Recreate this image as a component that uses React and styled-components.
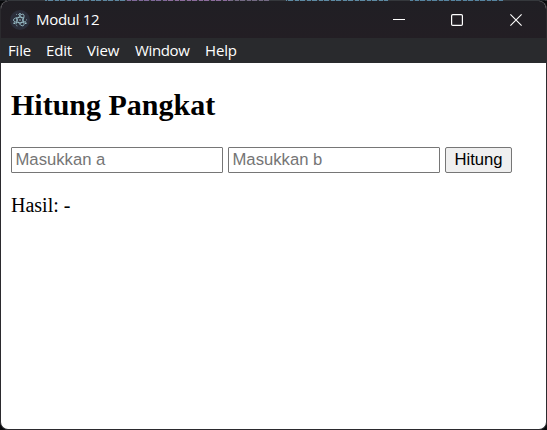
import React from "react";
import styled, { createGlobalStyle } from "styled-components";

const GlobalStyle = createGlobalStyle`
  * { box-sizing: border-box; }
  body { margin: 0; background: #0b0d10; overflow: hidden; }
`;

const Desktop = styled.div`
  width: 547px;
  height: 430px;
  background: #08090b;
`;

/* Sliver of the code editor that shows above the window */
const EditorSliver = styled.div`
  height: 1px;
  background:
    repeating-linear-gradient(90deg, transparent 0 5px, #35383c 5px 7px, transparent 7px 11px, #35383c 11px 12px),
    linear-gradient(90deg, #1c1f23 0 8px, #35383c 8px 45px, #5d87a0 45px 125px, #80699a 125px 166px,
      #8c6c9c 166px 230px, #746a83 230px 269px, #35383c 269px 286px, #5d8aa3 286px 388px,
      #35383c 388px 410px, #5684a0 410px 503px, #35383c 503px 539px, #1c1f23 539px);
`;

const Window = styled.div`
  display: flex;
  flex-direction: column;
  height: 429px;
  border: 1px solid #2b2a2e;
  border-top: 0;
  border-radius: 8px;
  overflow: hidden;
  background: #fff;
`;

const TitleBar = styled.header`
  display: flex;
  align-items: center;
  height: 37px;
  flex: none;
  padding-left: 9px;
  background: linear-gradient(#201f24, #231e24);
  color: #fff;
`;

const AppIcon = styled.svg`
  width: 20px;
  height: 20px;
  flex: none;
`;

const Title = styled.span`
  flex: 1;
  padding: 0 0 2px 6px;
  font: 15px/20px "Open Sans", sans-serif;
  letter-spacing: -0.3px;
`;

const Control = styled.button`
  display: flex;
  align-items: center;
  justify-content: center;
  width: ${(p) => p.$width || 58}px;
  height: 37px;
  padding: 0;
  border: 0;
  background: none;
  color: #fff;
`;

const MenuBar = styled.nav`
  display: flex;
  height: 25px;
  flex: none;
  padding-left: 7px;
  background: #292a2d;
`;

const MenuItem = styled.span`
  width: ${(p) => p.$width}px;
  color: #fff;
  font: 15px/25px "Open Sans", sans-serif;
  letter-spacing: ${(p) => p.$spacing || -0.15}px;
  white-space: nowrap;
`;

const Content = styled.main`
  padding: 0 10px;
  color: #000;
  font: 20px/23px "Liberation Serif", serif;
`;

const Heading = styled.h2`
  margin: 25px 0;
  font-size: 30px;
  line-height: 34px;
`;

const Form = styled.div`
  display: flex;
  gap: 5px;
`;

const NumberField = styled.input`
  width: 212px;
  height: 26px;
  padding: 1px 3.5px;
  border: 1px solid #767676;
  border-radius: 1px;
  background: #fff;
  font: 16.667px "Liberation Sans", Arial, sans-serif;
  &::placeholder { color: #757575; }
`;

const SubmitButton = styled.button`
  width: 67px;
  height: 26px;
  padding: 0;
  border: 1px solid #767676;
  border-radius: 2px;
  background: #efefef;
  color: #000;
  font: 16.667px "Liberation Sans", Arial, sans-serif;
`;

const Result = styled.p`
  margin: 21px 0;
`;

const menus = [
  { label: "File", width: 38 },
  { label: "Edit", width: 41 },
  { label: "View", width: 48 },
  { label: "Window", width: 70, spacing: -0.35 },
  { label: "Help", width: 40 },
];

export default function App() {
  return (
    <>
      <GlobalStyle />
      <Desktop>
        <EditorSliver />
        <Window>
          <TitleBar>
            <AppIcon viewBox="0 0 20 20">
              <circle cx="10" cy="10" r="10" fill="#2b2e3b" />
              <g fill="none" stroke="#9fc5cf" strokeWidth="0.8" strokeLinecap="round">
                <ellipse cx="10" cy="10" rx="6.6" ry="2.7" strokeDasharray="24 4" strokeDashoffset="-2" />
                <ellipse cx="10" cy="10" rx="6.6" ry="2.7" strokeDasharray="24 4" strokeDashoffset="-2" transform="rotate(120 10 10)" />
                <ellipse cx="10" cy="10" rx="6.6" ry="2.7" strokeDasharray="24 4" strokeDashoffset="-2" transform="rotate(240 10 10)" />
              </g>
              <g fill="#9fc5cf">
                <circle cx="10" cy="10" r="0.8" />
                <circle cx="4.2" cy="13.2" r="0.85" />
                <circle cx="15.8" cy="13.2" r="0.85" />
                <circle cx="10" cy="3.8" r="0.85" />
              </g>
            </AppIcon>
            <Title>Modul 12</Title>
            <Control aria-label="Minimize">
              <svg width="12" height="12" viewBox="0 0 12 12">
                <path d="M0 5.5H12" stroke="currentColor" />
              </svg>
            </Control>
            <Control aria-label="Maximize">
              <svg width="12" height="12" viewBox="0 0 12 12">
                <rect x=".6" y=".6" width="10.8" height="10.8" rx="1.2" fill="none" stroke="currentColor" strokeWidth="1.2" />
              </svg>
            </Control>
            <Control aria-label="Close" $width={60}>
              <svg width="12" height="12" viewBox="0 0 12 12">
                <path d="M.4 .4L11.6 11.6M11.6 .4L.4 11.6" stroke="currentColor" strokeWidth="1.1" />
              </svg>
            </Control>
          </TitleBar>
          <MenuBar>
            {menus.map((m) => (
              <MenuItem key={m.label} $width={m.width} $spacing={m.spacing}>{m.label}</MenuItem>
            ))}
          </MenuBar>
          <Content>
            <Heading>Hitung Pangkat</Heading>
            <Form>
              <NumberField placeholder="Masukkan a" />
              <NumberField placeholder="Masukkan b" />
              <SubmitButton>Hitung</SubmitButton>
            </Form>
            <Result>Hasil: -</Result>
          </Content>
        </Window>
      </Desktop>
    </>
  );
}
